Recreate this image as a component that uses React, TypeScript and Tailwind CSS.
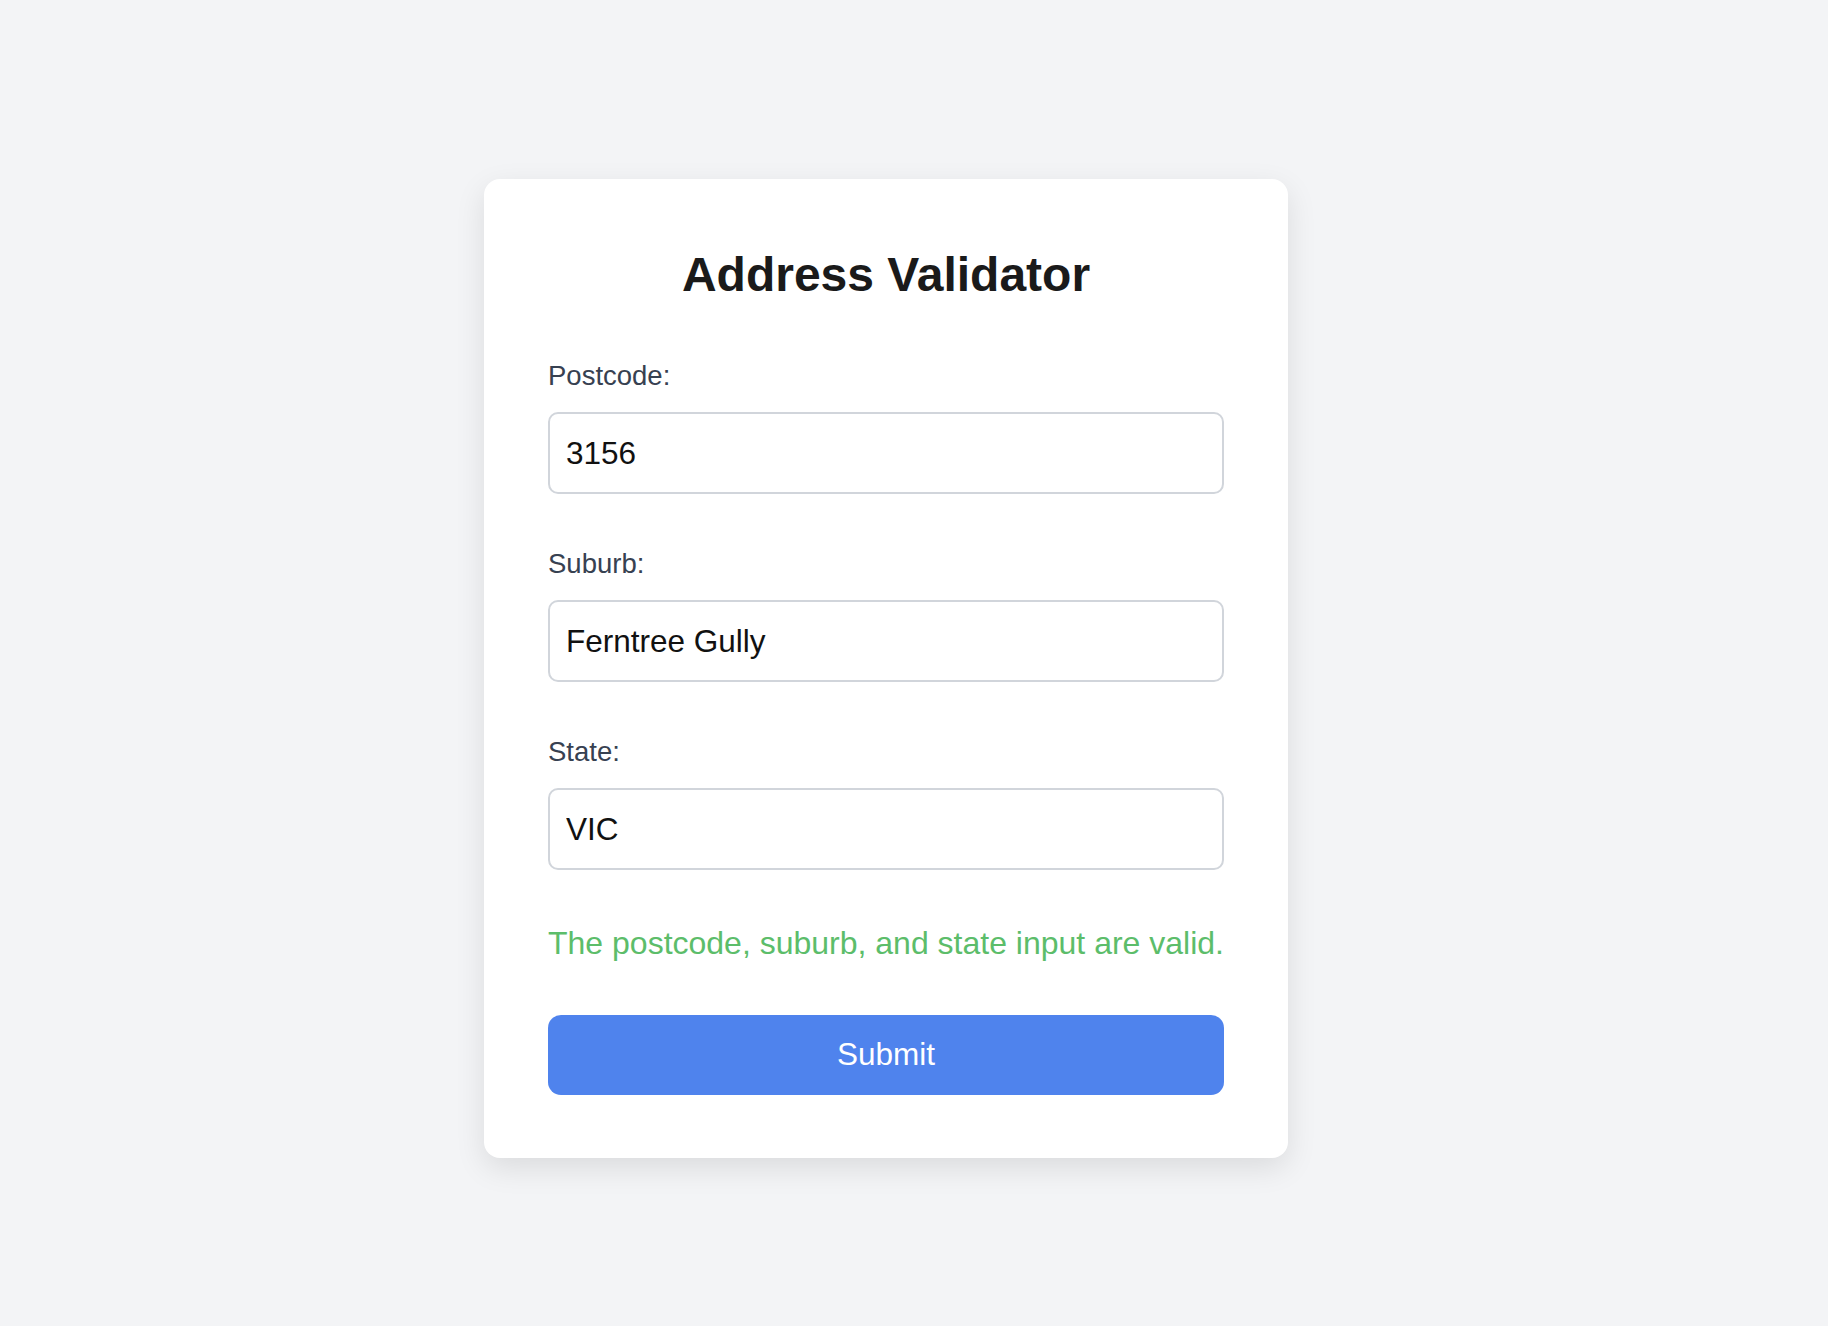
import { useState } from 'react';

interface FieldProps {
  id: string;
  label: string;
  value: string;
  onChange: (v: string) => void;
}

function Field({ id, label, value, onChange }: FieldProps) {
  return (
    <div className="flex flex-col">
      <label htmlFor={id} className="mb-[17px] text-[27.5px] leading-[38px] text-[#374151]">
        {label}
      </label>
      <input
        id={id}
        value={value}
        onChange={(e) => onChange(e.target.value)}
        className="h-[82px] w-full rounded-[10px] border-2 border-[#d1d5db] bg-white px-[16px] text-[31.5px] text-[#111111] outline-none"
      />
    </div>
  );
}

export default function App() {
  const [postcode, setPostcode] = useState('3156');
  const [suburb, setSuburb] = useState('Ferntree Gully');
  const [state, setState] = useState('VIC');

  return (
    <div
      className="flex min-h-screen items-center justify-center bg-[#f3f4f6] pr-[56px] pt-[11px]"
      style={{ fontFamily: '"Liberation Sans", Arial, sans-serif' }}
    >
      <div className="flex w-[804px] flex-col rounded-[16px] bg-white px-[64px] pb-[63px] pt-[64px] shadow-[0_10px_30px_rgba(0,0,0,0.1)]">
        <h1 className="mb-[51px] text-center text-[48px] font-bold leading-[63px] text-[#1a1a1a]">
          Address Validator
        </h1>

        <form onSubmit={(e) => e.preventDefault()} className="flex flex-col">
          <div className="flex flex-col gap-[51px]">
            <Field id="postcode" label="Postcode:" value={postcode} onChange={setPostcode} />
            <Field id="suburb" label="Suburb:" value={suburb} onChange={setSuburb} />
            <Field id="state" label="State:" value={state} onChange={setState} />
          </div>

          <p className="mt-[49px] text-[32px] leading-[48px] text-[#5cbd6a]">
            The postcode, suburb, and state input are valid.
          </p>

          <button
            type="submit"
            className="mt-[48px] h-[80px] w-full rounded-[13px] bg-[#4f83ed] text-[31.5px] text-white"
          >
            Submit
          </button>
        </form>
      </div>
    </div>
  );
}
